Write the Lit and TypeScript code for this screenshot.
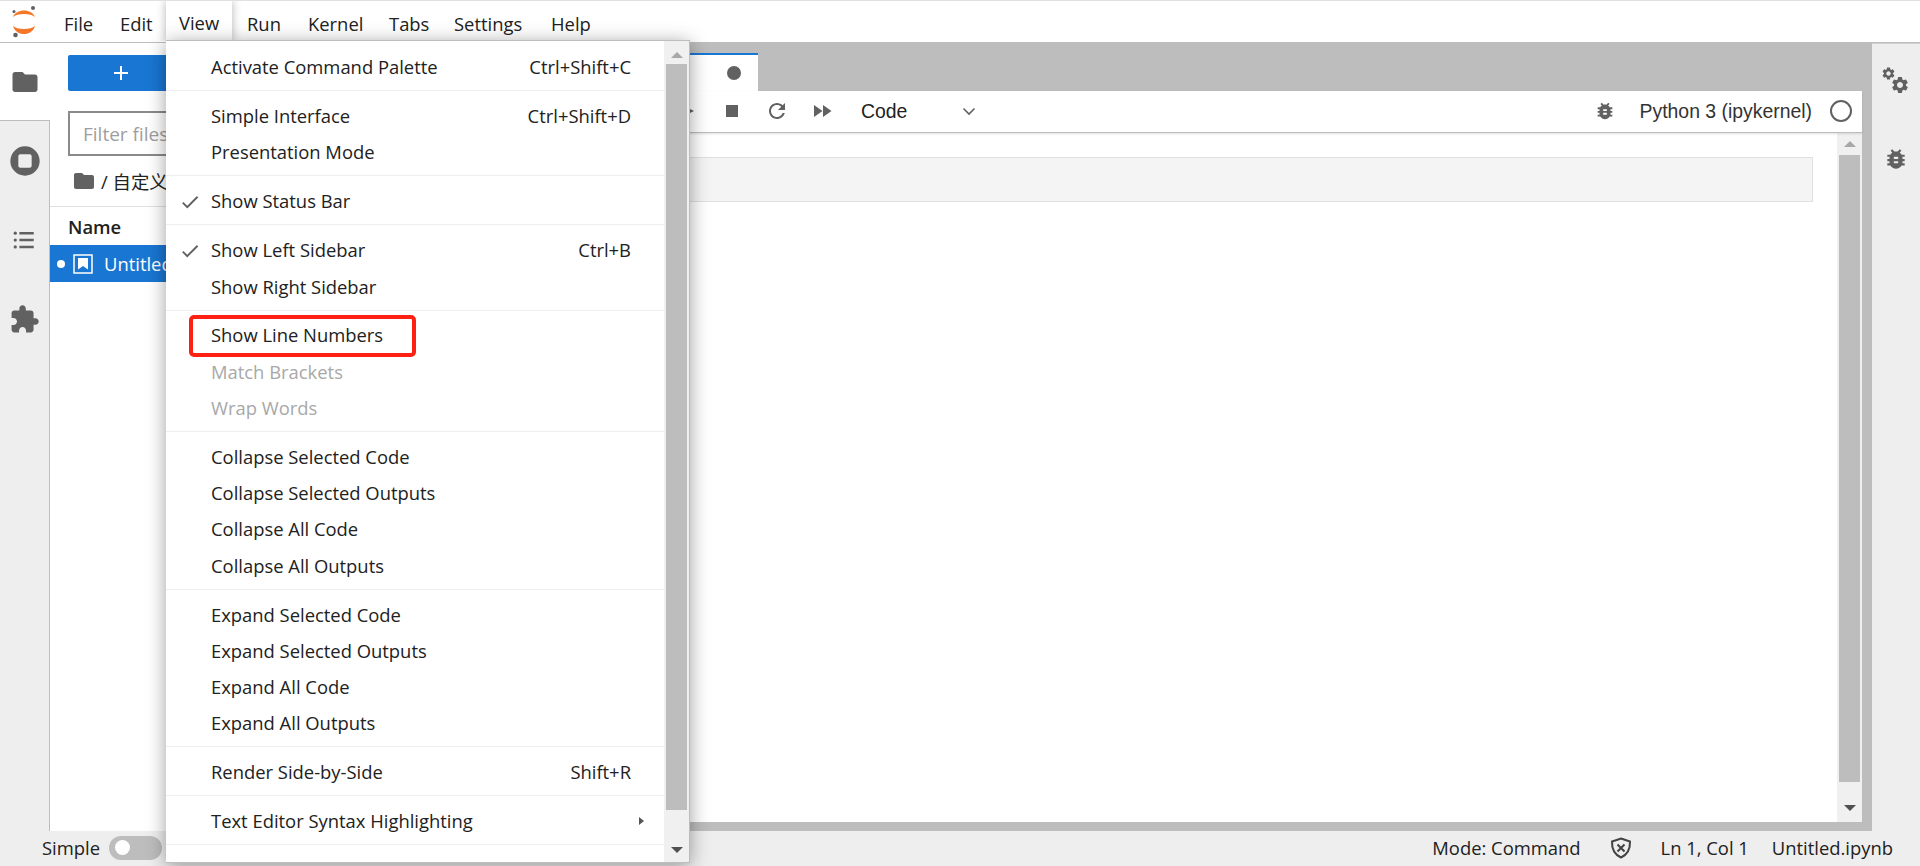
import { LitElement, css, html, svg } from "lit";
import { customElement } from "lit/decorators.js";

const ICONS = {
  folder: svg`<path d="M10 4H4c-1.1 0-1.99.9-1.99 2L2 18c0 1.1.9 2 2 2h16c1.1 0 2-.9 2-2V8c0-1.1-.9-2-2-2h-8l-2-2z"/>`,
  list: svg`<path d="M19 5.5H7.5v2H19v-2zM19 11H7.5v2H19v-2zM19 16.5H7.5v2H19v-2z"/><circle cx="4.2" cy="6.5" r="1.3"/><circle cx="4.2" cy="12" r="1.3"/><circle cx="4.2" cy="17.5" r="1.3"/>`,
  stop: svg`<path fill-rule="evenodd" d="M12 1a11 11 0 1 0 0 22 11 11 0 0 0 0-22zM8.5 7h7c.8 0 1.5.7 1.5 1.5v7c0 .8-.7 1.5-1.5 1.5h-7C7.7 17 7 16.3 7 15.5v-7C7 7.7 7.7 7 8.5 7z"/>`,
  puzzle: svg`<path d="M20.5 11H19V7c0-1.1-.9-2-2-2h-4V3.5C13 2.12 11.88 1 10.5 1S8 2.12 8 3.5V5H4c-1.1 0-1.99.9-1.99 2v3.8H3.5c1.49 0 2.7 1.21 2.7 2.7s-1.21 2.7-2.7 2.7H2V20c0 1.1.9 2 2 2h3.8v-1.5c0-1.49 1.21-2.7 2.7-2.7 1.49 0 2.7 1.21 2.7 2.7V22H17c1.1 0 2-.9 2-2v-4h1.5c1.38 0 2.5-1.12 2.5-2.5S21.88 11 20.5 11z"/>`,
  check: svg`<path d="M9 16.17L4.83 12l-1.41 1.41L9 19 21 7l-1.41-1.41z"/>`,
  refresh: svg`<path d="M17.65 6.35C16.2 4.9 14.21 4 12 4c-4.42 0-7.99 3.58-7.99 8s3.57 8 7.99 8c3.73 0 6.84-2.55 7.73-6h-2.08c-.82 2.33-3.04 4-5.65 4-3.31 0-6-2.69-6-6s2.69-6 6-6c1.66 0 3.14.69 4.22 1.78L13 11h7V4l-2.35 2.35z"/>`,
  forward: svg`<path d="M4 18l8.5-6L4 6v12zm9-12v12l8.5-6L13 6z"/>`,
  bug: svg`<path d="M20 8h-2.81c-.45-.78-1.07-1.45-1.82-1.96L17 4.41 15.59 3l-2.17 2.17C12.96 5.06 12.49 5 12 5c-.49 0-.96.06-1.41.17L8.41 3 7 4.41l1.62 1.63C7.88 6.55 7.26 7.22 6.81 8H4v2h2.09c-.05.33-.09.66-.09 1v1H4v2h2v1c0 .34.04.67.09 1H4v2h2.81c1.04 1.79 2.97 3 5.19 3s4.15-1.21 5.19-3H20v-2h-2.09c.05-.33.09-.66.09-1v-1h2v-2h-2v-1c0-.34-.04-.67-.09-1H20V8zm-6 8h-4v-2h4v2zm0-4h-4v-2h4v2z"/>`,
};

const GEAR = "M19.14 12.94c.04-.3.06-.61.06-.94 0-.32-.02-.64-.07-.94l2.03-1.58c.18-.14.23-.41.12-.61l-1.92-3.32c-.12-.22-.37-.29-.59-.22l-2.39.96c-.5-.38-1.03-.7-1.62-.94l-.36-2.54c-.04-.24-.24-.41-.48-.41h-3.84c-.24 0-.43.17-.47.41l-.36 2.54c-.59.24-1.13.57-1.62.94l-2.39-.96c-.22-.08-.47 0-.59.22L2.74 8.87c-.12.21-.08.47.12.61l2.03 1.58c-.05.3-.09.63-.09.94s.02.64.07.94l-2.03 1.58c-.18.14-.23.41-.12.61l1.92 3.32c.12.22.37.29.59.22l2.39-.96c.5.38 1.03.7 1.62.94l.36 2.54c.05.24.24.41.48.41h3.84c.24 0 .44-.17.47-.41l.36-2.54c.59-.24 1.13-.56 1.62-.94l2.39.96c.22.08.47 0 .59-.22l1.92-3.32c.12-.22.07-.47-.12-.61l-2.01-1.58zM12 15.6c-1.98 0-3.6-1.62-3.6-3.6s1.62-3.6 3.6-3.6 3.6 1.62 3.6 3.6-1.62 3.6-3.6 3.6z";

const icon = (name: keyof typeof ICONS, size = 24) => html`
  <svg class="icon" width=${size} height=${size} viewBox="0 0 24 24">${ICONS[name]}</svg>
`;

type Entry = { label: string; key?: string; checked?: boolean; off?: boolean; sub?: boolean };

const MENU: Entry[][] = [
  [{ label: "Activate Command Palette", key: "Ctrl+Shift+C" }],
  [{ label: "Simple Interface", key: "Ctrl+Shift+D" }, { label: "Presentation Mode" }],
  [{ label: "Show Status Bar", checked: true }],
  [{ label: "Show Left Sidebar", key: "Ctrl+B", checked: true }, { label: "Show Right Sidebar" }],
  [{ label: "Show Line Numbers" }, { label: "Match Brackets", off: true }, { label: "Wrap Words", off: true }],
  [
    { label: "Collapse Selected Code" },
    { label: "Collapse Selected Outputs" },
    { label: "Collapse All Code" },
    { label: "Collapse All Outputs" },
  ],
  [
    { label: "Expand Selected Code" },
    { label: "Expand Selected Outputs" },
    { label: "Expand All Code" },
    { label: "Expand All Outputs" },
  ],
  [{ label: "Render Side-by-Side", key: "Shift+R" }],
  [{ label: "Text Editor Syntax Highlighting", sub: true }],
];

const TOP_MENUS = [
  { label: "File", width: 56 },
  { label: "Edit", width: 59 },
  { label: "View", width: 68 },
  { label: "Run", width: 61 },
  { label: "Kernel", width: 81 },
  { label: "Tabs", width: 65 },
  { label: "Settings", width: 97 },
  { label: "Help", width: 70 },
];

@customElement("app-root")
export class AppRoot extends LitElement {
  static override styles = css`
    :host {
      display: block;
      position: relative;
      width: 1920px;
      height: 866px;
      overflow: hidden;
      font-family: "Open Sans", "Noto Sans", "Noto Sans CJK SC", sans-serif;
      font-size: 18.4px;
      color: #212121;
      background: #fff;
    }
    .icon {
      display: block;
      fill: #616161;
      flex: none;
    }

    .page {
      display: flex;
      flex-direction: column;
      height: 100%;
    }

    .topbar {
      display: flex;
      align-items: center;
      height: 43px;
      flex: none;
      box-sizing: border-box;
      border-top: 1px solid #e0e0e0;
      border-bottom: 1px solid #bdbdbd;
      padding-top: 3px;
    }
    .logo {
      width: 51px;
      flex: none;
      margin-top: -3px;
    }
    .topitem {
      padding-left: 13px;
      box-sizing: border-box;
      white-space: nowrap;
    }

    .body {
      flex: 1;
      display: flex;
      min-height: 0;
    }

    .leftbar {
      width: 50px;
      flex: none;
      background: #eee;
      border-right: 1px solid #bdbdbd;
      box-sizing: border-box;
      display: flex;
      flex-direction: column;
    }
    .leftbar .tab {
      height: 79.5px;
      flex: none;
      display: flex;
      align-items: center;
      justify-content: center;
    }
    .leftbar .tab.active {
      height: 77px;
      background: #fff;
      width: 50px;
      border-bottom: 1px solid #bdbdbd;
      box-sizing: content-box;
    }

    .files {
      width: 450px;
      flex: none;
      background: #fff;
      display: flex;
      flex-direction: column;
    }
    .new-btn {
      margin: 12px 0 0 18px;
      height: 36px;
      width: 400px;
      background: #1976d2;
      border-radius: 2px;
      display: flex;
      align-items: center;
      padding-left: 45px;
      box-sizing: border-box;
    }
    .filter {
      margin: 20px 0 0 18px;
      width: 400px;
      height: 45px;
      box-sizing: border-box;
      border: 2px solid #8a8a8a;
      padding-left: 13px;
      display: flex;
      align-items: center;
      color: #9e9e9e;
      font-size: 19px;
    }
    .crumbs {
      margin: 0;
      padding-left: 22px;
      height: 51px;
      display: flex;
      align-items: center;
      gap: 5px;
      border-bottom: 1px solid #e0e0e0;
      box-sizing: border-box;
      white-space: nowrap;
    }
    .name-head {
      height: 38px;
      padding-left: 18px;
      display: flex;
      align-items: center;
      font-weight: 600;
      box-sizing: border-box;
    }
    .file-row {
      height: 37px;
      background: #1976d2;
      color: #fff;
      display: flex;
      align-items: center;
      padding-left: 7px;
      white-space: nowrap;
    }
    .dot {
      width: 8px;
      height: 8px;
      background: #fff;
      border-radius: 50%;
      margin-right: 8px;
    }
    .nb-icon {
      width: 20px;
      height: 20px;
      margin-right: 11px;
    }

    .dock {
      flex: 1;
      min-width: 0;
      background: #bdbdbd;
      padding: 0 10px 9px 0;
      display: flex;
      flex-direction: column;
    }
    .tabbar {
      height: 48px;
      flex: none;
      padding-top: 10px;
      box-sizing: border-box;
    }
    .nb-tab {
      width: 258px;
      height: 38px;
      background: #fff;
      border-top: 2px solid #1976d2;
      box-sizing: border-box;
      display: flex;
      align-items: center;
      justify-content: flex-end;
      padding-right: 17px;
    }
    .tab-dot {
      width: 14px;
      height: 14px;
      background: #616161;
      border-radius: 50%;
    }
    .toolbar {
      height: 42px;
      flex: none;
      background: #fff;
      border-bottom: 1px solid #bdbdbd;
      box-shadow: 0 1px 2px rgba(0, 0, 0, 0.12);
      box-sizing: border-box;
      display: flex;
      align-items: center;
      font-family: "Liberation Sans", Arial, sans-serif;
      font-size: 19.4px;
      padding: 0 0 1px 180px;
      position: relative;
    }
    .play {
      width: 0;
      height: 0;
      border-top: 7px solid transparent;
      border-bottom: 7px solid transparent;
      border-left: 14px solid #616161;
    }
    .stop-square {
      width: 12px;
      height: 12px;
      background: #616161;
      margin-left: 32px;
    }
    .code-select {
      display: flex;
      align-items: center;
      width: 116px;
      justify-content: space-between;
      margin-left: 27px;
    }
    .spacer {
      flex: 1;
    }
    .kernel-name {
      margin: 0 18px 0 24px;
      color: #333;
      white-space: nowrap;
    }
    .kernel-ring {
      width: 18px;
      height: 18px;
      border: 2px solid #616161;
      border-radius: 50%;
      margin-right: 10px;
    }
    .nb-body {
      flex: 1;
      min-height: 0;
      background: #fff;
      display: flex;
    }
    .cell-area {
      flex: 1;
      padding: 24px 24px 0 0;
    }
    .cell {
      height: 45px;
      background: #f4f4f4;
      border: 1px solid #e0e0e0;
      box-sizing: border-box;
      margin-left: 100px;
    }

    .scroll {
      width: 25px;
      flex: none;
      background: #f0f0f0;
      display: flex;
      flex-direction: column;
      align-items: center;
      box-sizing: border-box;
      padding: 8px 0 0;
    }
    .arrow {
      width: 0;
      height: 0;
      border-left: 6px solid transparent;
      border-right: 6px solid transparent;
      flex: none;
    }
    .arrow.up {
      border-bottom: 6px solid #a8a8a8;
    }
    .arrow.down {
      border-top: 6px solid #505050;
    }
    .thumb {
      width: 21px;
      background: #bdbdbd;
      flex: 1;
      margin: 8px 0 23px;
    }
    .scroll .arrow.down {
      margin-bottom: 11px;
    }

    .rightbar {
      width: 48px;
      flex: none;
      background: #eee;
      border-top: 1px solid #d0d0d0;
      display: flex;
      flex-direction: column;
      align-items: center;
      padding-top: 22px;
      gap: 50px;
    }
    .gears {
      width: 30px;
      height: 30px;
      display: block;
      fill: #616161;
    }

    .status {
      height: 35px;
      flex: none;
      background: #eee;
      display: flex;
      align-items: center;
      white-space: nowrap;
      padding-bottom: 2px;
      box-sizing: border-box;
    }
    .simple {
      margin-left: 42px;
      width: 67px;
    }
    .switch {
      width: 53px;
      height: 24px;
      background: #bdbdbd;
      border-radius: 12px;
      display: flex;
      align-items: center;
      padding-left: 6px;
      box-sizing: border-box;
    }
    .knob {
      width: 15px;
      height: 15px;
      background: #fff;
      border-radius: 50%;
    }
    .status-right {
      margin-left: auto;
      display: flex;
      align-items: center;
      gap: 23px;
      padding-right: 27px;
    }
    .shield {
      fill: none;
      stroke: #424242;
      display: block;
      margin: 0 5px;
    }

    .menu {
      position: absolute;
      left: 166px;
      top: 40px;
      width: 524px;
      height: 823px;
      box-sizing: border-box;
      background: #fff;
      border: 1px solid #bdbdbd;
      border-left: 0;
      box-shadow: 0 3px 18px rgba(0, 0, 0, 0.38);
      display: flex;
    }
    .menu-tab {
      position: absolute;
      left: 166px;
      top: 1px;
      width: 66px;
      height: 40px;
      box-sizing: border-box;
      background: #fff;
      padding: 9px 0 0 13px;
      box-shadow: 0 0 9px rgba(0, 0, 0, 0.3);
      clip-path: inset(0 -12px 0 -12px);
    }
    .menu-list {
      flex: 1;
      min-width: 0;
      padding-top: 7.6px;
      position: relative;
    }
    .menu-group {
      border-bottom: 1px solid #eee;
      padding-bottom: 5.4px;
      margin-bottom: 6.3px;
    }
    .menu-item {
      position: relative;
      height: 36.25px;
      display: flex;
      align-items: center;
      justify-content: space-between;
      padding: 0 33px 0 45px;
      white-space: nowrap;
    }
    .menu-item.off {
      color: #a8a8a8;
    }
    .menu-item .check {
      position: absolute;
      left: 13px;
      top: 8px;
    }
    .caret {
      width: 0;
      height: 0;
      border-top: 4px solid transparent;
      border-bottom: 4px solid transparent;
      border-left: 5px solid #555;
      margin-right: -13px;
    }
    .mark {
      position: absolute;
      left: 23px;
      top: 274px;
      width: 227px;
      height: 42px;
      box-sizing: border-box;
      border: 4px solid #ff2014;
      border-radius: 5px;
    }
    .menu .scroll {
      padding-top: 11px;
    }
    .menu .thumb {
      margin: 6px 0 37px;
    }
    .menu .scroll .arrow.down {
      margin-bottom: 9px;
    }
  `;

  private renderEntry(item: Entry) {
    return html`
      <div class="menu-item ${item.off ? "off" : ""}">
        ${item.checked ? html`<span class="check">${icon("check", 22)}</span>` : null}
        <span>${item.label}</span>
        ${item.key ? html`<span>${item.key}</span>` : null}
        ${item.sub ? html`<span class="caret"></span>` : null}
      </div>
    `;
  }

  override render() {
    return html`
      <div class="page">
        <div class="topbar">
          <div class="logo">
            <svg width="48" height="42" viewBox="0 0 48 42" style="display:block">
              <path fill="#f37726" d="M13 16C16 7.300 32 7.300 35 16C31 12 17 12 13 16Z" />
              <path fill="#f37726" d="M13 25C17 29 31 29 35 25C32 35.700 16 35.700 13 25Z" />
              <circle cx="33" cy="7" r="2" fill="#616161" />
              <circle cx="14" cy="10.500" r="1.500" fill="#616161" />
              <circle cx="15.500" cy="34" r="2.300" fill="#616161" />
            </svg>
          </div>
          ${TOP_MENUS.map((m) => html`<div class="topitem" style="width:${m.width}px">${m.label}</div>`)}
        </div>

        <div class="body">
          <div class="leftbar">
            <div class="tab active">${icon("folder", 30)}</div>
            <div class="tab">${icon("stop", 32)}</div>
            <div class="tab">${icon("list", 30)}</div>
            <div class="tab">${icon("puzzle", 31)}</div>
          </div>

          <div class="files">
            <div class="new-btn">
              <svg width="16" height="16" viewBox="0 0 16 16" fill="#fff">
                <path d="M7 1h2v14H7zM1 7h14v2H1z" />
              </svg>
            </div>
            <div class="filter">Filter files by name</div>
            <div class="crumbs">${icon("folder", 24)}<span>/ 自定义</span></div>
            <div class="name-head">Name</div>
            <div class="file-row">
              <span class="dot"></span>
              <svg class="nb-icon" viewBox="0 0 20 20">
                <rect x="1" y="1" width="18" height="18" fill="none" stroke="#fff" stroke-width="1.5" />
                <path fill="#fff" d="M5 4h10v11.5l-5-3.5-5 3.5z" />
              </svg>
              <span>Untitled.ipynb</span>
            </div>
          </div>

          <div class="dock">
            <div class="tabbar">
              <div class="nb-tab"><span class="tab-dot"></span></div>
            </div>
            <div class="toolbar">
              <span class="play"></span>
              <span class="stop-square"></span>
              <svg class="icon" style="margin-left:27px" width="24" height="24" viewBox="0 0 24 24">${ICONS.refresh}</svg>
              <svg class="icon" style="margin-left:21px" width="24" height="24" viewBox="0 0 24 24">${ICONS.forward}</svg>
              <div class="code-select">
                <span>Code</span>
                <svg width="16" height="16" viewBox="0 0 16 16" fill="none" stroke="#616161" stroke-width="1.6">
                  <path d="M2.5 5.5L8 11l5.5-5.5" />
                </svg>
              </div>
              <div class="spacer"></div>
              ${icon("bug", 22)}
              <span class="kernel-name">Python 3 (ipykernel)</span>
              <span class="kernel-ring"></span>
            </div>
            <div class="nb-body">
              <div class="cell-area"><div class="cell"></div></div>
              <div class="scroll">
                <span class="arrow up"></span>
                <span class="thumb"></span>
                <span class="arrow down"></span>
              </div>
            </div>
          </div>

          <div class="rightbar">
            <svg class="gears" viewBox="0 0 30 30">
              <svg x="0" y="0" width="15" height="15" viewBox="0 0 24 24"><path d=${GEAR} /></svg>
              <svg x="9" y="9" width="20" height="20" viewBox="0 0 24 24"><path d=${GEAR} /></svg>
            </svg>
            ${icon("bug", 26)}
          </div>
        </div>

        <div class="status">
          <span class="simple">Simple</span>
          <span class="switch"><span class="knob"></span></span>
          <div class="status-right">
            <span>Mode: Command</span>
            <svg class="shield" width="24" height="24" viewBox="0 0 24 24" stroke-width="2">
              <path d="M12 2.5l9 3c.3 7.5-2.5 13-9 16-6.500-3-9.300-8.500-9-16z" />
              <path d="M8.500 8.500l7 7M15.500 8.500l-7 7" />
            </svg>
            <span>Ln 1, Col 1</span>
            <span>Untitled.ipynb</span>
          </div>
        </div>
      </div>

      <div class="menu-tab">View</div>
      <div class="menu">
        <div class="menu-list">
          ${MENU.map(
            (group) => html`<div class="menu-group">${group.map((item) => this.renderEntry(item))}</div>`
          )}
          <div class="mark"></div>
        </div>
        <div class="scroll">
          <span class="arrow up"></span>
          <span class="thumb"></span>
          <span class="arrow down"></span>
        </div>
      </div>
    `;
  }
}
